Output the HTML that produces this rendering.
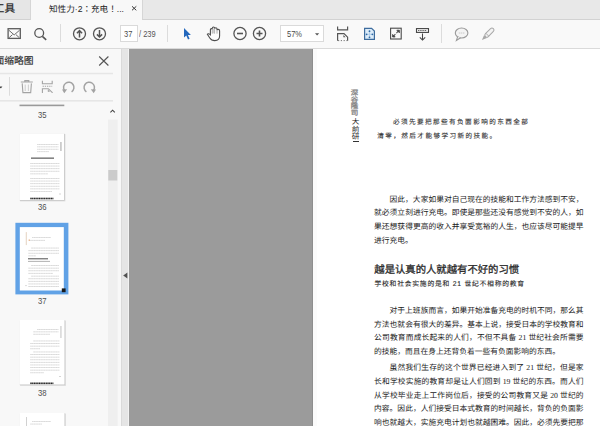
<!DOCTYPE html>
<html lang="zh-CN"><head><meta charset="utf-8">
<style>
*{margin:0;padding:0;box-sizing:border-box}
html,body{width:600px;height:426px;overflow:hidden;background:#f9f9f9;font-family:"Liberation Sans",sans-serif;position:relative}
.abs{position:absolute}
#tabbar{left:0;top:0;width:600px;height:20px;background:#e8e8e8}
#tooltab{left:0;top:0;width:31px;height:20px;background:#e6e6e6;border-right:1px solid #d6d6d6;border-bottom:1px solid #d2d2d2}
#acttab{left:31px;top:0;width:111px;height:20px;background:#f8f8f8}
#resttab{left:142px;top:0;width:458px;height:20px;background:#e8e8e8;border-left:1px solid #d6d6d6;border-bottom:1px solid #d2d2d2}
#toolbar{left:0;top:20px;width:600px;height:29px;background:#f9f9f9;border-bottom:1px solid #dadada}
.sep{position:absolute;width:1px;background:#dcdcdc}
#sidebar{left:0;top:49px;width:121px;height:377px;background:#f8f8f8}
#splitter{left:121px;top:49px;width:8px;height:377px;background:#e5e5e5;border-left:1px solid #dadada;border-right:1px solid #f2f2f2}
#docarea{left:129px;top:49px;width:471px;height:377px;background:#9b9b9b}
#page{left:313px;top:49px;width:287px;height:377px;background:#fff;border-left:4px solid #fbfbfb}
#pshadow{left:312px;top:49px;width:1px;height:377px;background:#8e8e8e}
.t{position:absolute;white-space:nowrap;color:#333}
.ln{position:absolute;white-space:nowrap;font-family:"Liberation Serif",serif;color:#1a1a1a;font-size:7.75px;line-height:9px;height:9px;text-rendering:geometricPrecision}
.jl{text-align:justify;text-align-last:justify}
svg{position:absolute;overflow:visible}
</style></head><body>
<div id="tabbar" class="abs"></div>
<div id="tooltab" class="abs"></div>
<div id="acttab" class="abs"></div>
<div id="resttab" class="abs"></div>
<div class="t" style="left:-6.2px;top:3.3px;font-size:10.6px;line-height:13px;color:#222;text-rendering:geometricPrecision;-webkit-text-stroke:0.2px #222">工具</div>
<div class="t" lang="zh-TW" style="left:49px;top:3px;font-size:8.6px;line-height:12px;color:#222;text-rendering:geometricPrecision">知性力·2：充电！...</div>
<svg style="left:0;top:0" width="600" height="20"><path d="M132 6.3 L136.3 10.3 M136.3 6.3 L132 10.3" stroke="#3a3a3a" stroke-width="1"/></svg>

<div id="toolbar" class="abs"></div>

<div class="sep" style="left:60px;top:24px;height:18px"></div>
<div class="sep" style="left:167px;top:25px;height:17px"></div>
<div class="sep" style="left:441px;top:24px;height:19px"></div>
<div class="abs" style="left:119.5px;top:25.2px;width:18px;height:17.2px;background:#fff;border:1px solid #dadada"></div>
<div class="t" style="left:123.6px;top:28px;font-size:9.4px;line-height:12px;color:#4a4a4a;transform-origin:0 0;transform:scaleX(0.8)">37</div>
<div class="t" style="left:139px;top:28px;font-size:9.4px;line-height:12px;color:#555;transform-origin:0 0;transform:scaleX(0.8)">/ 239</div>
<div class="abs" style="left:279.5px;top:25.2px;width:44.5px;height:17.2px;background:#fff;border:1px solid #dadada"></div>
<div class="t" style="left:286.8px;top:28px;font-size:9.4px;line-height:12px;color:#4a4a4a;transform-origin:0 0;transform:scaleX(0.8)">57%</div>
<svg style="left:0;top:0" width="600" height="49">
 <g fill="none" stroke="#555" stroke-width="1.2">
  <rect x="8.1" y="28.7" width="12.2" height="9.7" stroke="#5c5c5c" stroke-width="1.3"/>
  <path d="M8.8 30.2 L14.2 34.9 L19.6 30.2 M9.2 37.6 L12.5 34.6 M19.2 37.6 L15.9 34.6" stroke="#6a6a6a" stroke-width="1"/>
  <circle cx="39.2" cy="33" r="4.4" stroke-width="1.3"/>
  <path d="M42.4 36.3 L46.2 39.8" stroke-width="1.6"/>
  <circle cx="79.5" cy="33.8" r="6" stroke-width="1.3"/>
  <path d="M79.5 37.6 V30.6 M76.9 33.2 L79.5 30.6 L82.1 33.2" stroke-width="1.5"/>
  <circle cx="99.5" cy="33.8" r="6" stroke-width="1.3"/>
  <path d="M99.5 30 V37 M96.9 34.4 L99.5 37 L102.1 34.4" stroke-width="1.5"/>
  <circle cx="240" cy="33.5" r="6.1" stroke-width="1.3"/>
  <path d="M237 33.5 H243" stroke-width="1.6"/>
  <circle cx="259.5" cy="33.5" r="6.1" stroke-width="1.3"/>
  <path d="M256.5 33.5 H262.5 M259.5 30.5 V36.5" stroke-width="1.6"/>
  <path d="M207.4 34.2 Q208.4 33 210.4 34.8 V29.8 Q210.4 28.6 211.4 28.6 Q212.3 28.6 212.3 29.6 V28.3 Q212.3 27 213.5 27 Q214.6 27 214.6 28.3 V28.8 Q214.6 27.8 215.8 27.8 Q217 27.8 217 29 V30.3 Q217 29.4 218.3 29.4 Q219.6 29.4 219.6 30.8 V36 Q219.6 40.6 214.8 40.6 Q211.4 40.6 209.8 38 Z" stroke="#4e4e4e" stroke-width="1.1" fill="#fdfdfd"/>
  <path d="M212.3 29.6 V33.6 M214.6 28.8 V33.6 M217 30.3 V33.6" stroke="#9a9a9a" stroke-width="0.8"/>
  <rect x="212.8" y="28.4" width="1.4" height="5" fill="#cfcfcf" stroke="none"/>
  <path d="M337.6 26.6 V29.9 H347.6 V26.6" stroke="#555" stroke-width="1.2"/>
  <path d="M337.6 40.8 V33.6 H344 L347.6 37.2 V40.8" stroke="#555" stroke-width="1.2"/>
  <path d="M338 40.6 H347.4" stroke="#777" stroke-width="1" stroke-dasharray="1.2 1.6"/>
  <path d="M343.4 35 L345.6 37.2 H343.4 Z" fill="#555" stroke="none"/>
  <path d="M364.6 28.3 H371.6 L374.4 31.1 V39.4 H364.6 Z" fill="#dcecf9" stroke="#3d6c9e" stroke-width="1.2"/>
  <path d="M369.5 31.5 V37 M366.8 34.3 H372.2" stroke="#a9c9e8" stroke-width="0.8"/>
  <circle cx="369.5" cy="31.2" r="0.9" fill="#2f6aa6" stroke="none"/>
  <circle cx="369.5" cy="37.3" r="0.9" fill="#2f6aa6" stroke="none"/>
  <circle cx="366.6" cy="34.3" r="0.9" fill="#2f6aa6" stroke="none"/>
  <circle cx="372.4" cy="34.3" r="0.9" fill="#2f6aa6" stroke="none"/>
  <rect x="390.6" y="28.2" width="10.6" height="10.8" stroke="#4a4a4a" stroke-width="1.1"/>
  <path d="M393 36.6 L395.4 34.1 M396.4 33.1 L398.8 30.6" stroke="#555" stroke-width="1.1"/>
  <path d="M396.8 30.2 H399.4 V32.8 Z M392.6 34.4 V37 H395.2 Z" fill="#444" stroke="#444" stroke-width="0.8"/>
  <rect x="416.5" y="28.6" width="12" height="3.8" stroke="#444" stroke-width="1.1"/>
  <path d="M418 30.5 H427" stroke="#666" stroke-width="1.1" stroke-dasharray="1.4 0.8"/>
  <path d="M422.5 33.6 V40 M419.8 37.3 L422.5 40 L425.2 37.3" stroke="#444" stroke-width="1.05"/>
  <ellipse cx="461.6" cy="33" rx="6.3" ry="5" stroke="#9a9a9a" stroke-width="1.1" fill="#f4f4f4"/>
  <path d="M457.6 36.8 L456.4 40.4 L460.6 37.8" stroke="#9a9a9a" stroke-width="1.1" fill="#f4f4f4"/>
  <path d="M458.8 33 H464.4" stroke="#c4c4c4" stroke-width="0.9" stroke-dasharray="1.5 0.6"/>
 </g>
 <path d="M184 28 L184 37.6 L186.3 35.6 L188 39.4 L189.6 38.7 L187.9 35.1 L190.9 34.9 Z" fill="#2468bd"/>
 <path d="M315 33.2 H319.2 L317.1 35.6 Z" fill="#555"/>
 <g transform="translate(488 34) rotate(-45)">
  <rect x="-3.6" y="-2" width="11.2" height="4" rx="2" fill="#f3f3f3" stroke="#a8a8a8" stroke-width="1"/>
  <path d="M-3.6 -2 L-8.6 0 L-3.6 2 Z" fill="#a8a8a8"/>
  <path d="M-1 -2 V2" stroke="#a8a8a8" stroke-width="0.9"/>
 </g>
</svg>

<div id="sidebar" class="abs"></div>
<div id="splitter" class="abs"></div>
<div id="docarea" class="abs"></div>
<div id="page" class="abs"></div>
<div id="pshadow" class="abs"></div>

<div class="t" style="left:-5.6px;top:55.2px;font-size:9.8px;line-height:13px;color:#2a2a2a;text-rendering:geometricPrecision;-webkit-text-stroke:0.15px #333">面缩略图</div>
<svg style="left:0;top:0" width="130" height="426">
 <defs><pattern id="tx" x="0" y="0" width="1.7" height="3" patternUnits="userSpaceOnUse"><rect width="1.4" height="3" fill="#d4d4d4"/></pattern><pattern id="tx2" x="0" y="0" width="1.7" height="3" patternUnits="userSpaceOnUse"><rect width="1.3" height="3" fill="#222"/></pattern></defs>
 <path d="M99.2 56.5 L108.4 65.5 M108.4 56.5 L99.2 65.5" stroke="#555" stroke-width="1.1" fill="none"/>
 <rect x="0" y="72.8" width="113" height="1.5" fill="#e6e6e6"/>
 <rect x="0" y="100" width="113" height="1.6" fill="#e6e6e6"/>
 <path d="M-0.5 86.4 H2.4 L0.9 88.6 Z" fill="#444"/>
 <rect x="9" y="77" width="1" height="18.7" fill="#dcdcdc"/>
 <g fill="none" stroke="#a3a3a3" stroke-width="1.1">
  <path d="M20.8 82 H32.8 M24.8 82 V80.6 H28.8 V82"/>
  <path d="M22.2 83.4 L22.9 92.6 H30.7 L31.4 83.4"/>
  <path d="M25.2 84.6 V91 M28.4 84.6 V91" stroke="#c8c8c8" stroke-width="0.9"/>
  <path d="M42.4 80.8 V83.8 H52.2 V80.8"/>
  <path d="M42.6 86.3 H52.2" stroke-dasharray="1.3 0.9"/>
  <path d="M42.4 93 V88.8 H48.4 L52.2 92.4 V93"/>
  <path d="M47.8 89.6 L50 91.8 H47.8 Z" fill="#999" stroke="none"/>
  <path d="M64.6 90.6 A5.2 5.2 0 1 1 71.6 91.8" stroke-width="1.5"/>
  <path d="M62 89.4 L64.3 93.2 L67.2 89.2 Z" fill="#a3a3a3" stroke="none"/>
  <path d="M93.4 90.6 A5.2 5.2 0 1 0 86.4 91.8" stroke-width="1.5"/>
  <path d="M96 89.4 L93.7 93.2 L90.8 89.2 Z" fill="#a3a3a3" stroke="none"/>
 </g>
 <rect x="108" y="119.5" width="9.6" height="307" fill="#efefef"/>
 <path d="M110.4 112.4 L112.6 110.2 L114.8 112.4" stroke="#444" stroke-width="1.1" fill="none"/>
 <rect x="108.3" y="170" width="9" height="10.5" fill="#cbcbcb"/>
 <rect x="19.5" y="104.6" width="44.8" height="1.6" fill="#9a9a9a"/>
 <rect x="20.1" y="134.1" width="45.3" height="67.3" fill="#dcdcdc"/><rect x="19.8" y="133.8" width="44.8" height="66.8" fill="#c4c4c4"/><rect x="19.5" y="133.5" width="44.5" height="66.5" fill="#fff"/>
 <rect x="37" y="144.0" width="21.5" height="0.9" fill="url(#tx)"/>
<rect x="37" y="146.4" width="21.5" height="0.9" fill="url(#tx)"/>
<rect x="37" y="148.8" width="21.5" height="0.9" fill="url(#tx)"/>
<rect x="37" y="151.2" width="12" height="0.9" fill="url(#tx)"/>
<rect x="60.5" y="142.0" width="0.9" height="9" fill="#999"/>
<rect x="31" y="157.5" width="23" height="1.3" fill="#666"/>
<rect x="30" y="163.0" width="29.5" height="0.9" fill="url(#tx)"/>
<rect x="30" y="165.6" width="29.5" height="0.9" fill="url(#tx)"/>
<rect x="30" y="168.2" width="29.5" height="0.9" fill="url(#tx)"/>
<rect x="30" y="170.8" width="29.5" height="0.9" fill="url(#tx)"/>
<rect x="30" y="173.4" width="18" height="0.9" fill="url(#tx)"/>
<rect x="30" y="178.0" width="29.5" height="0.9" fill="url(#tx)"/>
<rect x="30" y="180.6" width="29.5" height="0.9" fill="url(#tx)"/>
<rect x="30" y="183.2" width="29.5" height="0.9" fill="url(#tx)"/>
<rect x="30" y="185.8" width="29.5" height="0.9" fill="url(#tx)"/>
<rect x="30" y="188.4" width="29.5" height="0.9" fill="url(#tx)"/>
<rect x="30" y="191.0" width="22" height="0.9" fill="url(#tx)"/>
<rect x="59.5" y="193.5" width="1" height="1" fill="#aaa"/>
<rect x="30" y="197.7" width="23.5" height="1.6" fill="url(#tx2)"/>
 <rect x="15.4" y="222.8" width="53" height="71.6" fill="#61a2e6"/>
 <rect x="19.8" y="227.1" width="44" height="63.4" fill="#fff"/>
 <rect x="25.8" y="232.1" width="0.9" height="13" fill="#e2cdb9"/>
<rect x="32" y="237.1" width="19" height="0.9" fill="url(#tx)"/>
<rect x="30" y="239.9" width="15" height="0.9" fill="url(#tx)"/>
<rect x="28.6" y="239.5" width="1.4" height="1.4" fill="#e8b48c"/>
<rect x="31" y="247.6" width="28" height="0.9" fill="url(#tx)"/>
<rect x="28" y="250.2" width="31" height="0.9" fill="url(#tx)"/>
<rect x="28" y="252.79999999999998" width="31" height="0.9" fill="url(#tx)"/>
<rect x="28" y="255.4" width="8" height="0.9" fill="url(#tx)"/>
<rect x="28" y="258.1" width="20" height="1.3" fill="#777"/>
<rect x="28" y="260.9" width="22" height="0.9" fill="#aaa"/>
<rect x="31" y="265.1" width="28" height="0.9" fill="url(#tx)"/>
<rect x="28" y="267.70000000000005" width="31" height="0.9" fill="url(#tx)"/>
<rect x="28" y="270.3" width="31" height="0.9" fill="url(#tx)"/>
<rect x="28" y="272.90000000000003" width="25" height="0.9" fill="url(#tx)"/>
<rect x="31" y="275.7" width="28" height="0.9" fill="url(#tx)"/>
<rect x="28" y="278.3" width="31" height="0.9" fill="url(#tx)"/>
<rect x="28" y="280.9" width="31" height="0.9" fill="url(#tx)"/>
<rect x="28" y="283.5" width="31" height="0.9" fill="url(#tx)"/>
<rect x="28" y="286.09999999999997" width="31" height="0.9" fill="url(#tx)"/>
<rect x="25.5" y="285.1" width="1" height="1" fill="#bbb"/>
 <rect x="61.8" y="288.4" width="3.8" height="3.8" fill="#1a1a1a"/>
 <rect x="20.1" y="320.6" width="45.8" height="65.3" fill="#dcdcdc"/><rect x="19.8" y="320.3" width="45.3" height="64.8" fill="#c4c4c4"/><rect x="19.5" y="320.0" width="45.0" height="64.5" fill="#fff"/>
 <rect x="37" y="329.0" width="21.5" height="0.9" fill="url(#tx)"/>
<rect x="33" y="331.4" width="25.5" height="0.9" fill="url(#tx)"/>
<rect x="33" y="333.8" width="17" height="0.9" fill="url(#tx)"/>
<rect x="60.5" y="326" width="0.9" height="12" fill="#bbb"/>
<rect x="33" y="340.5" width="26.5" height="0.9" fill="url(#tx)"/>
<rect x="30" y="343.1" width="29.5" height="0.9" fill="url(#tx)"/>
<rect x="30" y="345.7" width="29.5" height="0.9" fill="url(#tx)"/>
<rect x="30" y="348.3" width="10" height="0.9" fill="url(#tx)"/>
<rect x="33" y="351.5" width="26.5" height="0.9" fill="url(#tx)"/>
<rect x="30" y="354.1" width="29.5" height="0.9" fill="url(#tx)"/>
<rect x="30" y="356.7" width="29.5" height="0.9" fill="url(#tx)"/>
<rect x="30" y="359.3" width="29.5" height="0.9" fill="url(#tx)"/>
<rect x="30" y="361.9" width="29.5" height="0.9" fill="url(#tx)"/>
<rect x="30" y="364.5" width="29.5" height="0.9" fill="url(#tx)"/>
<rect x="30" y="367.1" width="29.5" height="0.9" fill="url(#tx)"/>
<rect x="30" y="369.7" width="29.5" height="0.9" fill="url(#tx)"/>
<rect x="30" y="372.3" width="14" height="0.9" fill="url(#tx)"/>
<rect x="59.5" y="376" width="1" height="1" fill="#aaa"/>
<rect x="30" y="382.5" width="23.5" height="1.6" fill="url(#tx2)"/>
 <rect x="20.1" y="413.6" width="45.8" height="20.8" fill="#dcdcdc"/><rect x="19.8" y="413.3" width="45.3" height="20.3" fill="#c4c4c4"/><rect x="19.5" y="413.0" width="45.0" height="20.0" fill="#fff"/>
 <rect x="26" y="417" width="0.9" height="13" fill="#ccc"/>
<rect x="32" y="421" width="19" height="0.9" fill="url(#tx)"/>
<rect x="30" y="423.6" width="12" height="0.9" fill="url(#tx)"/>
 <path d="M127.4 272.5 V278.5 L123.2 275.5 Z" fill="#505050"/>
</svg>
<div class="t" style="left:37.8px;top:110px;font-size:9.2px;line-height:10px;color:#505050;transform-origin:0 0;transform:scaleX(0.84)">35</div>
<div class="t" style="left:37.8px;top:201.5px;font-size:9.2px;line-height:10px;color:#505050;transform-origin:0 0;transform:scaleX(0.84)">36</div>
<div class="t" style="left:37.8px;top:295.5px;font-size:9.2px;line-height:10px;color:#505050;transform-origin:0 0;transform:scaleX(0.84)">37</div>
<div class="t" style="left:37.8px;top:387.5px;font-size:9.2px;line-height:10px;color:#505050;transform-origin:0 0;transform:scaleX(0.84)">38</div>

<!--PAGE-->
<div class="t" style="left:374.3px;top:265px;font-size:10.35px;line-height:12px;color:#2a2a2a;-webkit-text-stroke:0.3px #2a2a2a;text-rendering:geometricPrecision">越是认真的人就越有不好的习惯</div>
<div class="t" style="left:374.5px;top:281px;font-size:6.8px;line-height:8px;letter-spacing:0.76px;color:#222;-webkit-text-stroke:0.12px #333;text-rendering:geometricPrecision">学校和社会实施的是和 21 世纪不相称的教育</div>
<div class="t" style="left:393px;top:118.5px;font-size:6.6px;line-height:8px;letter-spacing:1.42px;color:#2a2a2a;-webkit-text-stroke:0.1px #333;text-rendering:geometricPrecision">必须先要把那些有负面影响的东西全部</div>
<div class="t" style="left:377.3px;top:132.5px;font-size:6.6px;line-height:8px;letter-spacing:1.42px;color:#2a2a2a;-webkit-text-stroke:0.1px #333;text-rendering:geometricPrecision">清零，然后才能够学习新的技能。</div>
<div class="t" style="left:349.3px;top:89.3px;font-size:6.7px;line-height:7px;writing-mode:vertical-rl;color:#a8a8a8;-webkit-text-stroke:0.35px #858585;transform-origin:0 0;transform:scaleX(1.12);text-rendering:geometricPrecision">深谷隆司</div>
<div class="t" style="left:351.8px;top:118px;font-size:7.3px;line-height:7.5px;writing-mode:vertical-rl;color:#222;transform-origin:0 0;transform:scaleX(1.05);text-rendering:geometricPrecision">大前研</div>
<div class="abs" style="left:353px;top:141px;width:5.5px;height:1.1px;background:#333"></div>


<div class="ln jl" style="left:389.6px;top:194.7px;width:194.0px">因此，大家如果对自己现在的技能和工作方法感到不安，</div>
<div class="ln jl" style="left:374.1px;top:208.3px;width:209.5px">就必须立刻进行充电。即使是那些还没有感觉到不安的人，如</div>
<div class="ln jl" style="left:374.1px;top:221.9px;width:209.5px">果还想获得更高的收入并享受宽裕的人生，也应该尽可能提早</div>
<div class="ln" style="left:374.1px;top:235.6px;">进行充电。</div>
<div class="ln jl" style="left:389.6px;top:306.1px;width:194.0px">对于上班族而言，如果开始准备充电的时机不同，那么其</div>
<div class="ln jl" style="left:374.1px;top:319.7px;width:209.5px">方法也就会有很大的差异。基本上说，接受日本的学校教育和</div>
<div class="ln jl" style="left:374.1px;top:333.3px;width:209.5px">公司教育而成长起来的人们，不但不具备 21 世纪社会所需要</div>
<div class="ln" style="left:374.1px;top:346.9px;">的技能，而且在身上还背负着一些有负面影响的东西。</div>
<div class="ln jl" style="left:389.6px;top:363.4px;width:194.0px">虽然我们生存的这个世界已经进入到了 21 世纪，但是家</div>
<div class="ln jl" style="left:374.1px;top:377.0px;width:209.5px">长和学校实施的教育却是让人们回到 19 世纪的东西。而人们</div>
<div class="ln jl" style="left:374.1px;top:390.6px;width:209.5px">从学校毕业走上工作岗位后，接受的公司教育又是 20 世纪的</div>
<div class="ln jl" style="left:374.1px;top:404.2px;width:209.5px">内容。因此，人们接受日本式教育的时间越长，背负的负面影</div>
<div class="ln jl" style="left:374.1px;top:417.8px;width:209.5px">响也就越大，实施充电计划也就越困难。因此，必须先要把那</div>
</body></html>
